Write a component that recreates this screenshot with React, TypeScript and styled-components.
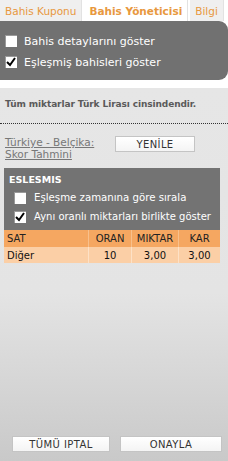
import styled, { createGlobalStyle } from "styled-components";

const GlobalStyle = createGlobalStyle`
    html, body {
        margin: 0;
        padding: 0;
        background: #ffffff;
    }
    body {
        font-family: "DejaVu Sans", Verdana, sans-serif;
    }
`;

const Page = styled.div`
    width: 228px;
    height: 461px;
    display: flex;
    flex-direction: column;
    overflow: hidden;
`;

const TabBar = styled.div`
    display: flex;
    height: 21px;
    gap: 2px;
`;

const Tab = styled.div<{ $active?: boolean }>`
    display: flex;
    align-items: center;
    padding: 0 5px;
    font-size: 10.5px;
    font-weight: ${({ $active }) => ($active ? "bold" : "normal")};
    color: #e8983e;
    background: ${({ $active }) => ($active ? "#ffffff" : "#efefef")};
    border-right: 1px solid #e2e2e2;
`;

const OptionsPanel = styled.div`
    background: #717171;
    height: 59px;
    border-radius: 0 9px 9px 0;
    display: flex;
    flex-direction: column;
    justify-content: center;
    gap: 8px;
    padding: 2px 0 0 5px;
    box-sizing: border-box;
`;

const CheckRow = styled.label<{ $size?: number }>`
    display: flex;
    align-items: center;
    gap: 7px;
    color: #ffffff;
    font-size: ${({ $size }) => $size ?? 11}px;
`;

const Box = styled.span`
    width: 12px;
    height: 12px;
    flex-shrink: 0;
    background: #ffffff;
    box-shadow: inset 1px 1px 0 #9a9a9a;
    display: flex;
    align-items: center;
    justify-content: center;
`;

function Check({ checked }: { checked?: boolean }) {
    return (
        <Box>
            {checked && (
                <svg width="10" height="10" viewBox="0 0 10 10">
                    <path d="M1 5 L4 8 L9 1" stroke="#000" strokeWidth="2" fill="none" />
                </svg>
            )}
        </Box>
    );
}

const Content = styled.div`
    margin-top: 8px;
    flex: 1;
    background: linear-gradient(#e6e6e6 0%, #e4e4e4 55%, #c9c9c9 100%);
    display: flex;
    flex-direction: column;
`;

const Note = styled.div`
    font-size: 9px;
    font-weight: bold;
    color: #5a5a5a;
    letter-spacing: -0.1px;
    padding: 11px 0 0 5px;
    height: 24px;
    border-bottom: 1px dotted #333;
`;

const MatchRow = styled.div`
    display: flex;
    align-items: flex-start;
    padding: 12px 0 0 5px;
    height: 32px;
`;

const MatchLink = styled.a`
    color: #777777;
    font-size: 10.5px;
    line-height: 12px;
    text-decoration: underline;
    width: 110px;
`;

const SmallButton = styled.button<{ $width: number }>`
    width: ${({ $width }) => $width}px;
    height: 16px;
    background: linear-gradient(#ffffff, #f4f4f4);
    border: 1px solid #c4c4c4;
    font-family: "DejaVu Sans", Verdana, sans-serif;
    font-size: 10px;
    color: #333;
    padding: 0;
    letter-spacing: 0.4px;
`;

const MatchedBox = styled.div`
    margin: 0 8px 0 4px;
    background: #737373;
    padding: 6px 0 4px 0;
`;

const MatchedTitle = styled.div`
    color: #ffffff;
    font-weight: bold;
    font-size: 9.5px;
    padding-left: 5px;
    margin-bottom: 3px;
`;

const MatchedOption = styled(CheckRow)`
    padding-left: 10px;
    gap: 8px;
    height: 19px;
`;

const Table = styled.div`
    margin: 0 8px 0 4px;
    display: grid;
    grid-template-columns: 84px 43px 47px 1fr;
    grid-template-rows: 17px 16px;
    font-size: 10px;
`;

const Cell = styled.div<{ $head?: boolean; $align?: string }>`
    display: flex;
    align-items: center;
    justify-content: ${({ $align }) => $align ?? "center"};
    padding: 0 3px;
    background: ${({ $head }) => ($head ? "#f5a761" : "#fbcfa6")};
    color: ${({ $head }) => ($head ? "#222" : "#111")};
    border-left: 1px solid ${({ $head }) => ($head ? "#f8c08c" : "#fde1c6")};
    &:nth-child(4n + 1) {
        border-left: none;
    }
`;

const Spacer = styled.div`
    flex: 1;
`;

const Footer = styled.div`
    display: flex;
    gap: 10px;
    padding: 0 6px 9px 12px;
`;

export default function App() {
    const rows = [["Diğer", "10", "3,00", "3,00"]];
    return (
        <Page>
            <GlobalStyle />
            <TabBar>
                <Tab>Bahis Kuponu</Tab>
                <Tab $active>Bahis Yöneticisi</Tab>
                <Tab>Bilgi</Tab>
            </TabBar>
            <OptionsPanel>
                <CheckRow><Check />Bahis detaylarını göster</CheckRow>
                <CheckRow><Check checked />Eşleşmiş bahisleri göster</CheckRow>
            </OptionsPanel>
            <Content>
                <Note>Tüm miktarlar Türk Lirası cinsindendir.</Note>
                <MatchRow>
                    <MatchLink>Türkiye - Belçika:<br />Skor Tahmini</MatchLink>
                    <SmallButton $width={80}>YENİLE</SmallButton>
                </MatchRow>
                <MatchedBox>
                    <MatchedTitle>ESLESMIS</MatchedTitle>
                    <MatchedOption $size={10.2}><Check />Eşleşme zamanına göre sırala</MatchedOption>
                    <MatchedOption $size={10}><Check checked />Aynı oranlı miktarları birlikte göster</MatchedOption>
                </MatchedBox>
                <Table>
                    <Cell $head $align="flex-start">SAT</Cell>
                    <Cell $head>ORAN</Cell>
                    <Cell $head>MIKTAR</Cell>
                    <Cell $head>KAR</Cell>
                    {rows.map((r) => (
                        <>
                            <Cell $align="flex-start">{r[0]}</Cell>
                            <Cell>{r[1]}</Cell>
                            <Cell>{r[2]}</Cell>
                            <Cell>{r[3]}</Cell>
                        </>
                    ))}
                </Table>
                <Spacer />
                <Footer>
                    <SmallButton $width={98}>TÜMÜ IPTAL</SmallButton>
                    <SmallButton $width={102}>ONAYLA</SmallButton>
                </Footer>
            </Content>
        </Page>
    );
}
